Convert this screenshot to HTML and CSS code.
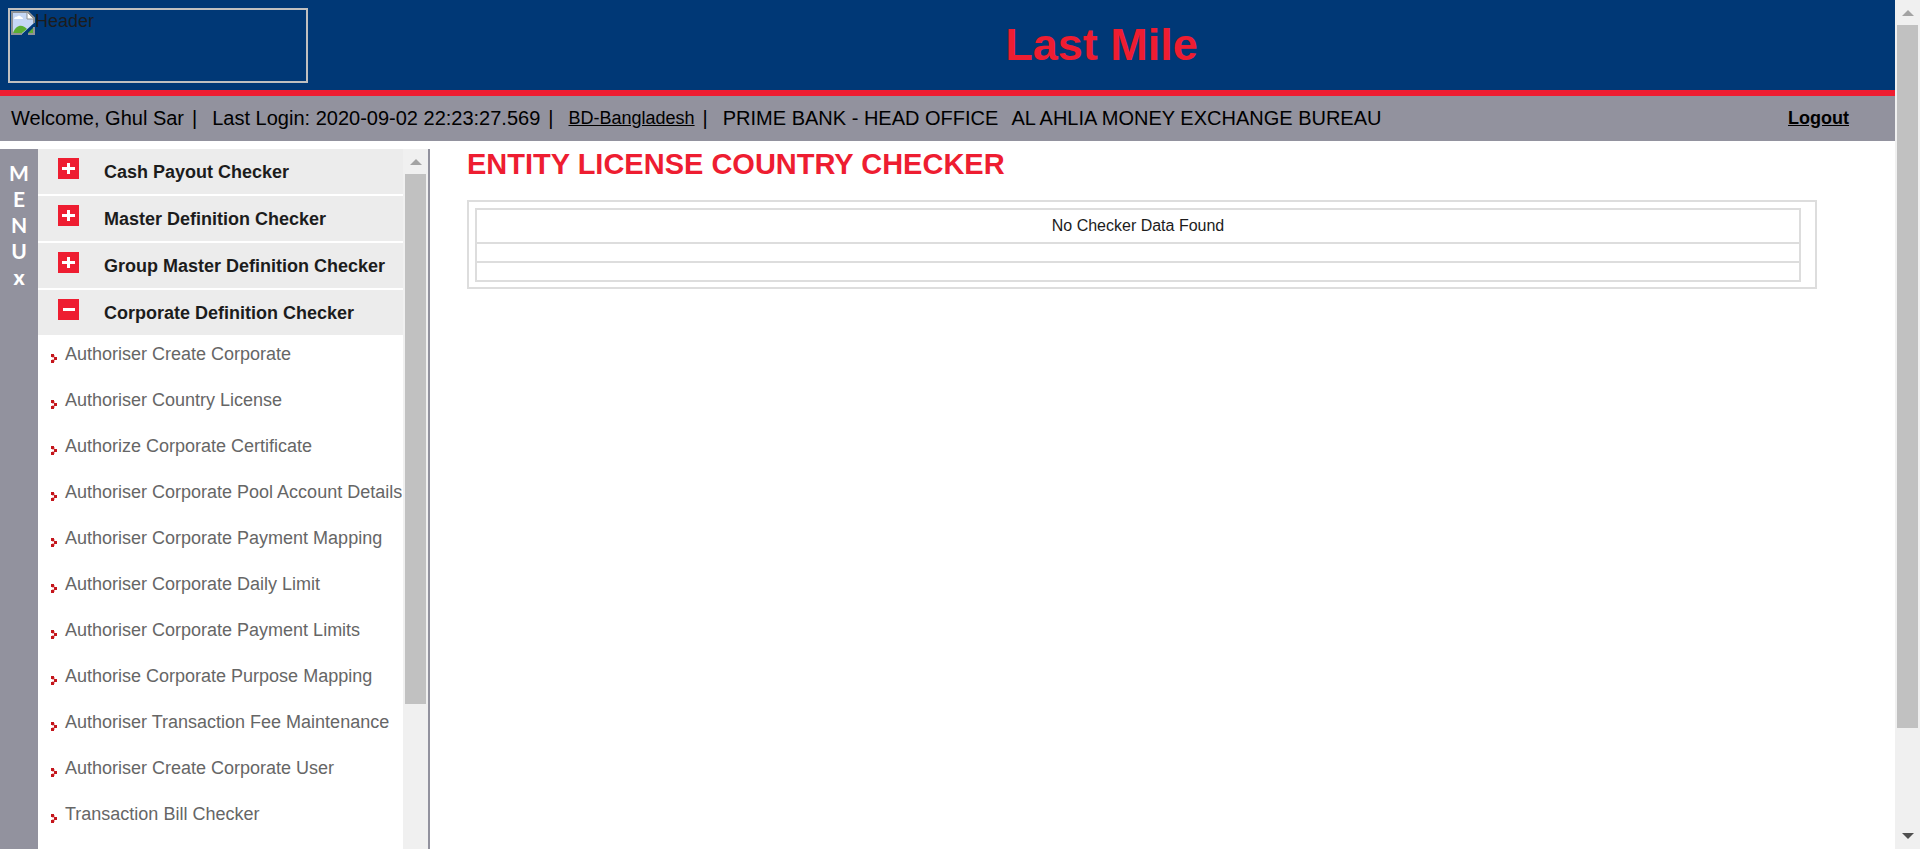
FILE: index.html
```html
<!DOCTYPE html>
<html lang="en">
<head>
<meta charset="utf-8">
<title>Last Mile</title>
<link rel="stylesheet" href="styles.css">
</head>
<body>
<svg class="defs" aria-hidden="true">
  <symbol id="plus" viewBox="0 0 21 21"><rect width="21" height="21" fill="#ee1d31"/><path d="M9 5h3v4h5v3h-5v4H9v-4H4V9h5z" fill="#fff"/></symbol>
  <symbol id="minus" viewBox="0 0 21 21"><rect width="21" height="21" fill="#ee1d31"/><path d="M5 9h12v3H5z" fill="#fff"/></symbol>
  <symbol id="dots" viewBox="0 0 6 9"><path d="M0 0h3v3H0zM3 3h3v3H3zM0 6h3v3H0z" fill="#c4161c"/><path d="M3 1h1v2H3zM3 6h1v2H3zM1 3h2v1H1zM1 5h2v1H1z" fill="#eeb3b3"/></symbol>
  <symbol id="up" viewBox="0 0 12 6"><path d="M6 0l6 6H0z"/></symbol>
  <symbol id="down" viewBox="0 0 12 6"><path d="M0 0h12L6 6z"/></symbol>
</svg>
<div class="page">
  <header class="header">
    <div class="logo" role="img" aria-label="Header">
      <svg class="broken" viewBox="0 0 24 24" aria-hidden="true">
        <path d="M1 1h16l6 6v5L11 23H1z" fill="#c6d7f5"/>
        <path d="M3 8c1-3 3-2 3-2 1-2 4-1 4 0 2 0 2 2 2 2z" fill="#fff"/>
        <path d="M2 22c3-9 10-9 14-4l-5 4z" fill="#5aae32"/>
        <path d="M17 22l6-6v6z" fill="#5aae32"/>
        <path d="M11 23H1V1h16l6 6v5M17 23h6v-7" fill="none" stroke="#8f9296" stroke-width="2"/>
        <path d="M16 1v7h7z" fill="#fff" stroke="#8f9296"/>
      </svg>
      <span>Header</span>
    </div>
    <h1 class="brand">Last Mile</h1>
  </header>
  <div class="userbar">
    <span>Welcome, Ghul Sar</span><span class="sep">|</span>
    <span>Last Login: 2020-09-02 22:23:27.569</span><span class="sep">|</span>
    <a class="country" href="#">BD-Bangladesh</a><span class="sep">|</span>
    <span class="bank">PRIME BANK - HEAD OFFICE</span>
    <span>AL AHLIA MONEY EXCHANGE BUREAU</span>
    <a class="logout" href="#">Logout</a>
  </div>
  <div class="body">
    <div class="strip"><span>M</span><span>E</span><span>N</span><span>U</span><span class="close">x</span></div>
    <nav class="sidebar">
      <div class="menu">
        <button class="group"><svg><use href="#plus"/></svg>Cash Payout Checker</button>
        <button class="group"><svg><use href="#plus"/></svg>Master Definition Checker</button>
        <button class="group"><svg><use href="#plus"/></svg>Group Master Definition Checker</button>
        <button class="group"><svg><use href="#minus"/></svg>Corporate Definition Checker</button>
        <ul class="items">
          <li><svg><use href="#dots"/></svg><a href="#">Authoriser Create Corporate</a></li>
          <li><svg><use href="#dots"/></svg><a href="#">Authoriser Country License</a></li>
          <li><svg><use href="#dots"/></svg><a href="#">Authorize Corporate Certificate</a></li>
          <li><svg><use href="#dots"/></svg><a href="#">Authoriser Corporate Pool Account Details</a></li>
          <li><svg><use href="#dots"/></svg><a href="#">Authoriser Corporate Payment Mapping</a></li>
          <li><svg><use href="#dots"/></svg><a href="#">Authoriser Corporate Daily Limit</a></li>
          <li><svg><use href="#dots"/></svg><a href="#">Authoriser Corporate Payment Limits</a></li>
          <li><svg><use href="#dots"/></svg><a href="#">Authorise Corporate Purpose Mapping</a></li>
          <li><svg><use href="#dots"/></svg><a href="#">Authoriser Transaction Fee Maintenance</a></li>
          <li><svg><use href="#dots"/></svg><a href="#">Authoriser Create Corporate User</a></li>
          <li><svg><use href="#dots"/></svg><a href="#">Transaction Bill Checker</a></li>
        </ul>
      </div>
      <div class="scroll scroll-menu"><svg class="dim"><use href="#up"/></svg><div class="thumb"></div></div>
    </nav>
    <main class="content">
      <h2 class="title">ENTITY LICENSE COUNTRY CHECKER</h2>
      <div class="panel">
        <table class="grid">
          <tr><td class="message">No Checker Data Found</td></tr>
          <tr><td></td></tr>
          <tr><td></td></tr>
        </table>
      </div>
    </main>
  </div>
</div>
<div class="scroll scroll-page"><svg class="dim"><use href="#up"/></svg><div class="track"><div class="thumb"></div></div><svg><use href="#down"/></svg></div>
</body>
</html>
```
FILE: styles.css
```css
* { box-sizing: border-box; }
body {
  margin: 0;
  height: 100vh;
  display: flex;
  overflow: hidden;
  background: #fff;
  color: #1c1c1c;
  font-family: Arial, "Liberation Sans", sans-serif;
  font-size: 18px;
}
.defs { display: none; }
.page { flex: 1; min-width: 0; display: flex; flex-direction: column; }

.header {
  display: flex;
  padding: 8px 0 7px 8px;
  background: #003876;
  border-bottom: 6px solid #ee1d31;
}
.logo {
  display: flex;
  align-items: flex-start;
  width: 300px;
  height: 75px;
  padding: 1px;
  border: 2px solid #c0c0c0;
  line-height: 20px;
}
.broken { width: 24px; height: 24px; }
.brand {
  flex: 1;
  margin: 0;
  text-align: center;
  font-size: 45px;
  line-height: 74px;
  color: #ee1d31;
}

.userbar {
  display: flex;
  align-items: center;
  height: 45px;
  padding: 0 46px 0 11px;
  background: #92929e;
  color: #000;
  font-size: 20px;
  white-space: nowrap;
}
.userbar a { color: #000; font-size: 18px; }
.sep { margin: 0 15px 0 8px; }
.bank { margin-right: 13px; }
.userbar .logout { margin-left: auto; font-weight: bold; }

.body { flex: 1; min-height: 0; display: flex; margin-top: 8px; }
.strip {
  display: flex;
  flex-direction: column;
  align-items: center;
  width: 38px;
  padding-top: 11px;
  background: #92929e;
  color: #fff;
  font: bold 21px/26px Lato, "Open Sans", sans-serif;
}
.close { font-weight: 900; }

.sidebar { display: flex; width: 392px; border-right: 2px solid #92929e; }
.menu { flex: 1; min-width: 0; overflow: hidden; white-space: nowrap; }
.group {
  display: flex;
  align-items: flex-start;
  gap: 25px;
  width: 100%;
  height: 45px;
  margin: 0 0 2px;
  padding: 9px 0 0 20px;
  border: 0;
  background: #ececec;
  color: #1c1c1c;
  font: bold 18px/28px Arial, "Liberation Sans", sans-serif;
}
.group svg { width: 21px; height: 21px; }
.items { margin: 0; padding: 0 0 0 13px; list-style: none; }
.items li {
  display: flex;
  align-items: flex-start;
  gap: 8px;
  height: 46px;
  padding-top: 7px;
  line-height: 20px;
}
.items svg { width: 6px; height: 9px; margin-top: 10px; }
.items a { color: #666; text-decoration: none; }

.scroll {
  display: flex;
  flex-direction: column;
  align-items: center;
  width: 25px;
  padding: 10px 2px;
  background: #f0f0f0;
}
.scroll svg { width: 12px; height: 6px; flex: none; fill: #505050; }
.scroll .dim { fill: #a3a3a3; margin-bottom: 9px; }
.thumb { width: 100%; background: #c1c1c1; }
.scroll-menu .thumb { height: 78%; }
.track { flex: 1; width: 100%; margin-bottom: 9px; }
.track .thumb { height: 88%; }

.content { flex: 1; min-width: 0; padding: 0 78px 0 37px; }
.title { margin: 0; font-size: 29px; line-height: 30px; color: #ee1d31; }
.panel {
  margin-top: 21px;
  padding: 6px 14px 5px 6px;
  border: 2px solid #ddd;
}
.grid { width: 100%; border-collapse: collapse; font-size: 16px; }
.grid td { height: 19px; padding: 0; border: 2px solid #ddd; text-align: center; }
.grid .message { height: 34px; }
```
